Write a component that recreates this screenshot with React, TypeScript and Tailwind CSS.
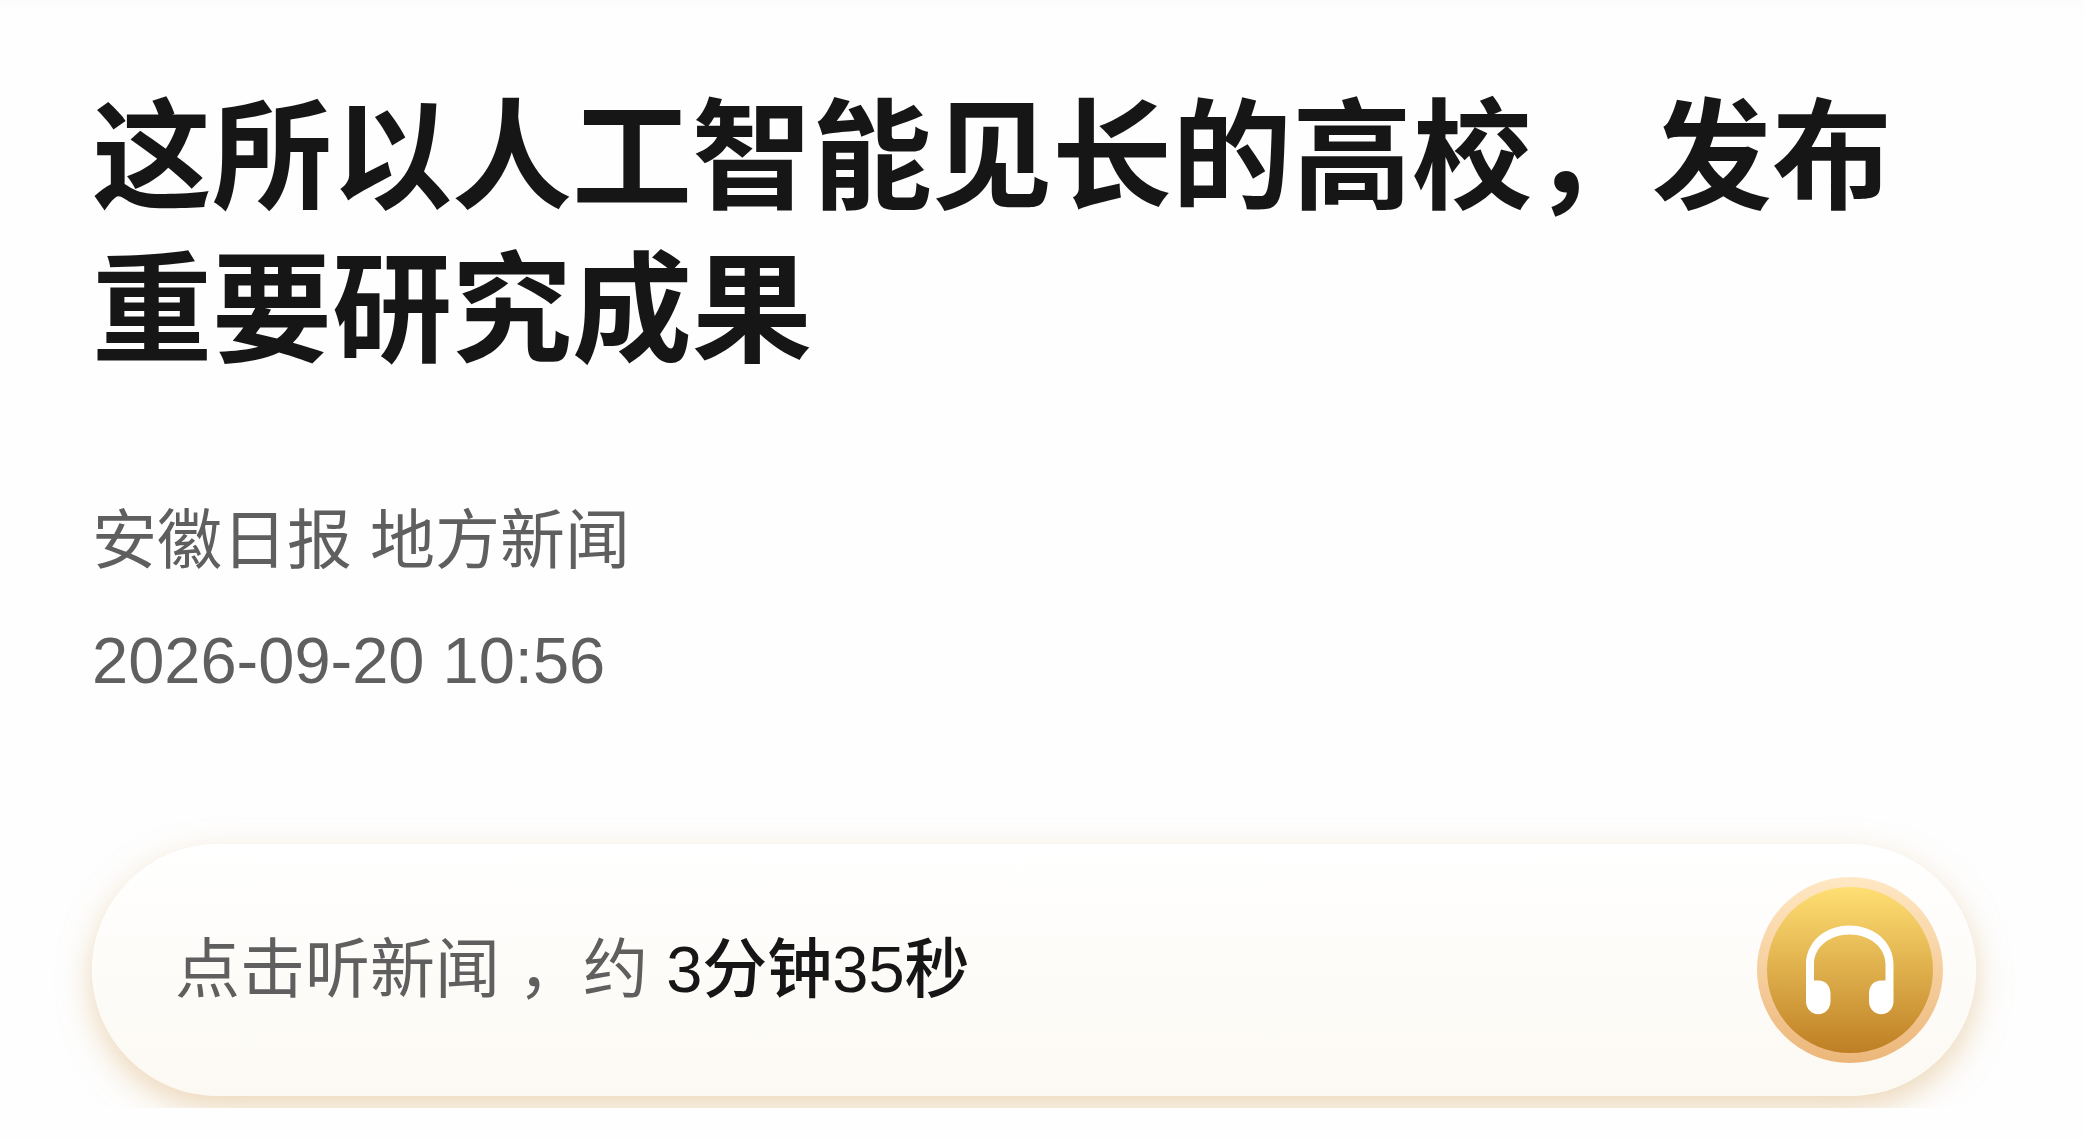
function HeadphonesBadge() {
  return (
    <svg viewBox="0 0 186 186" className="size-[186px] shrink-0" aria-hidden="true">
      <defs>
        <linearGradient id="ring" x1="0" y1="0" x2="0" y2="1">
          <stop stopColor="#ffe8c4" />
          <stop offset="1" stopColor="#ecb679" />
        </linearGradient>
        <linearGradient id="disc" x1="0" y1="0" x2="0" y2="1">
          <stop stopColor="#ffdf74" />
          <stop offset="1" stopColor="#be7f24" />
        </linearGradient>
      </defs>
      <circle cx="93" cy="93" r="93" fill="url(#ring)" />
      <circle cx="93" cy="93" r="83" fill="url(#disc)" />
      <path
        d="M49 124.500V87.500C49 65 68 48.500 92.500 48.500S136.500 65 136.500 87.500V124.500A12 12.500 0 0 1 112 124.500V117C112 108.500 117 103.500 124 103.500H128.500V87.500C128.500 70 112.500 57.500 92.500 57.500S57 70 57 87.500V103.500H61.500C68.500 103.500 73.500 108.500 73.500 117V124.500A12 12.500 0 0 1 49 124.500Z"
        fill="#fff"
      />
    </svg>
  );
}

export default function App() {
  return (
    <main className="flex min-h-screen flex-col bg-linear-to-b from-[#fcfcfc] to-[#fefefe] to-[12px] pt-[82px] font-['Liberation_Sans','Noto_Sans_CJK_SC',sans-serif]">
      <header className="pr-[108px] pl-[92px]">
        <h1 className="text-[120px] leading-[153px] font-bold text-[#161616]">
          这所以人工智能见长的高校，发布重要研究成果
        </h1>
        <div className="mt-[93px] flex flex-col text-[65px] leading-[120px] text-[#5f5f5f]">
          <p>安徽日报 地方新闻</p>
          <time dateTime="2026-09-20T10:56">2026-09-20 10:56</time>
        </div>
      </header>
      <div className="mt-[83px] overflow-hidden pt-[40px] pr-[108px] pb-[12px] pl-[92px]">
        <button
          type="button"
          className="flex h-[252px] w-full items-center justify-between rounded-full bg-linear-to-b from-white to-[#fcf9f3] pr-[33px] pl-[83px] text-left text-[65px] shadow-[0_12px_32px_rgba(222,184,128,0.55)]"
        >
          <span className="text-[#5f5f5f]">
            点击听新闻 ，约 <span className="font-medium text-[#161616]">3分钟35秒</span>
          </span>
          <HeadphonesBadge />
        </button>
      </div>
    </main>
  );
}
